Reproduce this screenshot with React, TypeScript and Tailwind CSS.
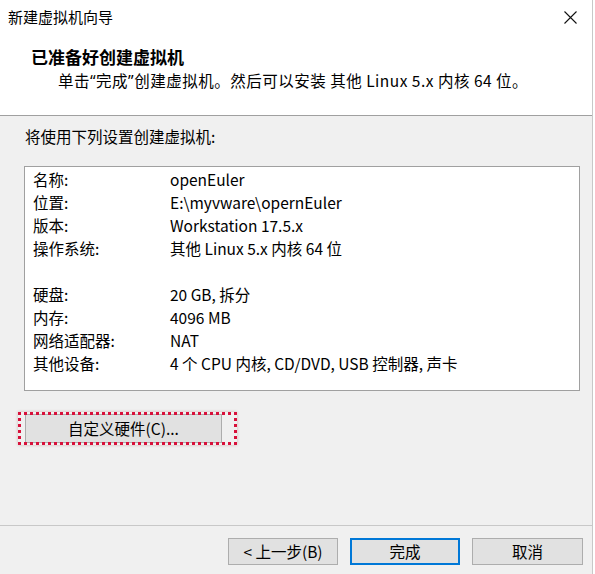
import React from "react";

const FONT = '"Noto Sans CJK SC", "Noto Sans", sans-serif';

const rows: [string, string][] = [
  ["名称:", "openEuler"],
  ["位置:", "E:\\myvware\\opernEuler"],
  ["版本:", "Workstation 17.5.x"],
  ["操作系统:", "其他 Linux 5.x 内核 64 位"],
  ["", ""],
  ["硬盘:", "20 GB, 拆分"],
  ["内存:", "4096 MB"],
  ["网络适配器:", "NAT"],
  ["其他设备:", "4 个 CPU 内核, CD/DVD, USB 控制器, 声卡"],
];

const Q = ({ c }: { c: string }) => (
  <span style={{ fontFamily: '"Noto Sans", sans-serif' }}>{c}</span>
);

export default function App() {
  return (
    <div
      className="w-[595px] h-[574px] bg-white overflow-hidden text-black"
      style={{ fontFamily: FONT }}
    >
      <div className="w-[593px] h-full border-r border-[#c8c8c8] flex flex-col bg-[#f0f0f0]">
        {/* white header */}
        <div className="bg-white">
          <div className="h-[34px] flex items-center justify-between pl-[8px] pr-[15px]">
            <span className="text-[15px] leading-[20px]">新建虚拟机向导</span>
            <svg width="13" height="13" viewBox="0 0 13 13">
              <path d="M0.5 0.5 L12.5 12.5 M12.5 0.5 L0.5 12.5" stroke="#111" strokeWidth="1.1" fill="none" />
            </svg>
          </div>
          <div className="pt-[13px] pb-[24px] pl-[31px] flex flex-col gap-[3px]">
            <div className="text-[17px] leading-[20px] font-bold">已准备好创建虚拟机</div>
            <div className="text-[15.5px] leading-[20px] pl-[27px] tracking-[0.5px]">
              单击<Q c="“" />完成<Q c="”" />创建虚拟机。然后可以安装 其他 Linux 5.x 内核 64 位。
            </div>
          </div>
        </div>
        <div className="h-px bg-[#a0a0a0]" />

        {/* body */}
        <div className="flex-1 px-[24px] pt-[10px]">
          <div className="text-[15.5px] leading-[20px] pl-[1px]">将使用下列设置创建虚拟机:</div>
          <div className="mt-[20px] w-[556px] h-[225px] bg-white border border-[#a0a0a0] pl-[8px] pt-px">
            {rows.map(([k, v], i) => (
              <div key={i} className="h-[23px] flex items-center text-[15.5px]">
                <span className="w-[137px] shrink-0">{k}</span>
                <span>{v}</span>
              </div>
            ))}
          </div>
          <div className="relative mt-[23px] ml-px w-[197px]">
            <button className="w-[197px] h-[29px] bg-[#e1e1e1] border border-[#adadad] text-[15.5px] flex items-center justify-center">
              自定义硬件(C)...
            </button>
            <div className="absolute left-[-7px] top-[-2px] w-[219px] h-[33px] border-[3px] border-dotted border-[#d8103a] shadow-[0_0_3px_rgba(120,0,0,0.25)]" />
          </div>
        </div>

        {/* footer */}
        <div className="h-px bg-[#c8c8c8]" />
        <div className="h-[48px] flex justify-end gap-[12px] pr-[9px] pt-[12px]">
          <button className="w-[110px] h-[27px] bg-[#e1e1e1] border border-[#adadad] text-[15.5px] flex items-center justify-center">
            &lt; 上一步(B)
          </button>
          <button className="w-[110px] h-[27px] bg-[#e1e1e1] border-2 border-[#0078d7] text-[15.5px] flex items-center justify-center">
            完成
          </button>
          <button className="w-[111px] h-[27px] bg-[#e1e1e1] border border-[#adadad] text-[15.5px] flex items-center justify-center">
            取消
          </button>
        </div>
      </div>
    </div>
  );
}
